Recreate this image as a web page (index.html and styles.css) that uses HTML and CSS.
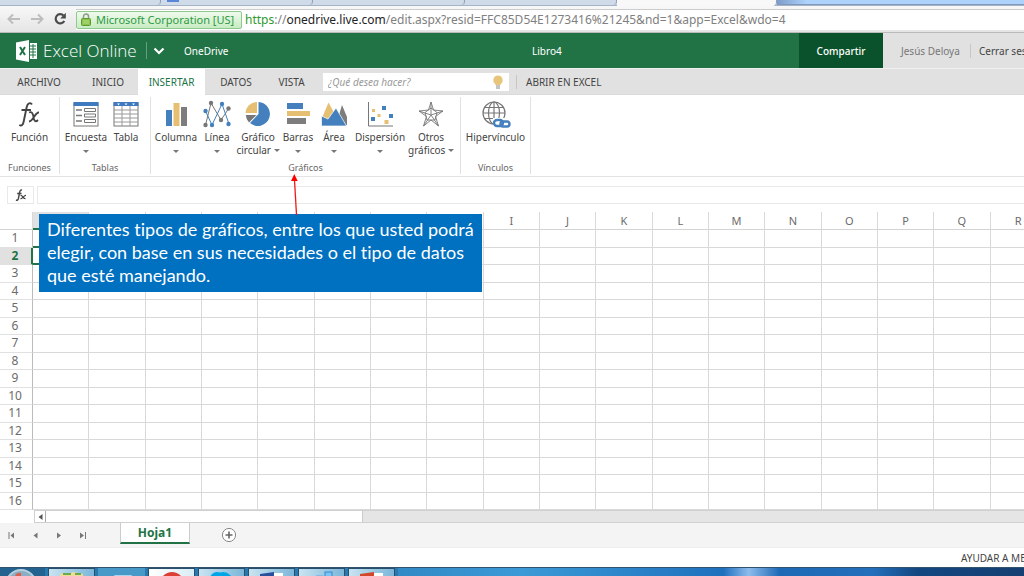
FILE: index.html
```html
<!DOCTYPE html>
<html lang="es">
<head>
<meta charset="utf-8">
<title>Libro4 - Excel Online</title>
<link rel="stylesheet" href="styles.css">
</head>
<body>
<div class="page">
  <div class="browser-tabs">
    <span class="browser-tab tab-first"></span><span class="browser-tab tab-docs"></span><span class="browser-tab"></span><span class="browser-tab"></span><span class="browser-tab tab-current"></span><span class="window-glass"></span>
  </div>
  <div class="toolbar">
    <button class="nav-button" aria-label="Atrás"><svg width="14" height="12" viewBox="0 0 14 12"><path d="M13 6H2M6 1.5L1.500 6L6 10.500" fill="none" stroke="#bdbdbd" stroke-width="2"/></svg></button>
    <button class="nav-button" aria-label="Adelante"><svg width="14" height="12" viewBox="0 0 14 12"><path d="M1 6H12M8 1.500L12.500 6L8 10.500" fill="none" stroke="#bdbdbd" stroke-width="2"/></svg></button>
    <button class="nav-button" aria-label="Recargar"><svg width="14" height="14" viewBox="0 0 14 14"><path d="M10.500 3.500A4.600 4.600 0 1 0 11.300 9" fill="none" stroke="#4a4a4a" stroke-width="2.200"/><path d="M12.800 0.800V6.500H7.200Z" fill="#4a4a4a"/></svg></button>
    <div class="address">
      <span class="certificate"><svg width="10" height="13" viewBox="0 0 10 13"><path d="M2.500 6V3.500a2.500 2.500 0 0 1 5 0V6" fill="none" stroke="#909a90" stroke-width="1.500"/><rect x="0.500" y="5.500" width="9" height="7" rx="1" fill="#8bc34a" stroke="#5c9a32"/><path d="M2 8H8M2 10H8" stroke="#b6dc84"/></svg>Microsoft Corporation [US]</span>
      <span class="url"><span class="scheme">https</span>://<span class="host">onedrive.live.com</span>/edit.aspx?resid=FFC85D54E1273416%21245&amp;nd=1&amp;app=Excel&amp;wdo=4</span>
    </div>
  </div>

  <header class="app-header">
    <svg class="excel-logo" width="22" height="22" viewBox="0 0 22 22"><path d="M0 2.500L13 0V22L0 19.500Z" fill="#fff"/><path d="M4 7L9 15M9 7L4 15" stroke="#217346" stroke-width="2"/><path d="M14 3H21V19H14Z" fill="#fff"/><path d="M14 6H20M14 9H20M14 12H20M14 15H20M17 4V18" stroke="#217346"/></svg>
    <span class="app-name">Excel Online</span>
    <button class="app-switch" aria-label="Aplicaciones"><svg width="12" height="8" viewBox="0 0 12 8"><path d="M1.500 1.500L6 6L10.500 1.500" fill="none" stroke="#fff" stroke-width="2.200"/></svg></button>
    <a class="drive-link" href="#">OneDrive</a>
    <span class="document-name">Libro4</span>
    <button class="share">Compartir</button>
    <div class="account"><span class="user">Jesús Deloya</span><a class="sign-out" href="#">Cerrar sesión</a></div>
  </header>

  <nav class="ribbon-tabs">
    <button class="ribbon-tab w-file">ARCHIVO</button>
    <button class="ribbon-tab w-home">INICIO</button>
    <button class="ribbon-tab w-insert active">INSERTAR</button>
    <button class="ribbon-tab w-data">DATOS</button>
    <button class="ribbon-tab w-view">VISTA</button>
    <label class="tell-me"><input type="text" placeholder="¿Qué desea hacer?" aria-label="¿Qué desea hacer?"><svg width="12" height="14" viewBox="0 0 12 14"><path d="M6 0.500a4.700 4.700 0 0 1 2.700 8.500V10H3.300V9A4.700 4.700 0 0 1 6 0.500Z" fill="#e9c57c"/><path d="M4 11H8M4 13H8" stroke="#888"/></svg></label>
    <a class="open-excel" href="#">ABRIR EN EXCEL</a>
  </nav>

  <section class="ribbon">
    <div class="group g-functions">
      <div class="commands">
        <button class="command"><svg width="28" height="28" viewBox="0 0 28 28"><path d="M17 4.500C15.500 2 12.500 3 11.700 7L8.800 21C8.200 25 6.500 26.500 4.300 25M6.500 10H16" fill="none" stroke="#444" stroke-width="1.900"/><path d="M14 12.500C17 11 18 14 18.500 17C19 21 20.500 22.500 23 20M24 12.500C20 12 18.500 21 14 21.500" fill="none" stroke="#444" stroke-width="1.800"/></svg><span>Función</span></button>
      </div>
      <div class="group-name">Funciones</div>
    </div>
    <div class="group g-tables">
      <div class="commands">
        <button class="command c50"><svg width="28" height="28" viewBox="0 0 28 28"><rect x="2" y="3" width="24" height="23" fill="#fff" stroke="#777"/><rect x="1.500" y="2" width="25" height="4" fill="#3f7abf"/><path d="M4 10H10M4 15.500H10M4 21H10" stroke="#777" stroke-width="1.500"/><path d="M12.500 8.500H23.500V11.500H12.500ZM12.500 14H23.500V17H12.500ZM12.500 19.500H23.500V22.500H12.500Z" fill="#fff" stroke="#777"/></svg><span>Encuesta</span><i class="caret"></i></button>
        <button class="command c30"><svg width="28" height="28" viewBox="0 0 28 28"><rect x="2" y="3" width="24" height="23" fill="#fff" stroke="#777"/><path d="M2 10H26M2 14H26M2 18H26M2 22H26M10 6V26M18 6V26" stroke="#999"/><rect x="1.500" y="2" width="25" height="4" fill="#3f7abf"/><path d="M5 3.500H8L6.500 5.200ZM12.500 3.500H15.500L14 5.200ZM20 3.500H23L21.500 5.200Z" fill="#fff"/></svg><span>Tabla</span></button>
      </div>
      <div class="group-name">Tablas</div>
    </div>
    <div class="group g-charts">
      <div class="commands">
        <button class="command c46"><svg width="28" height="28" viewBox="0 0 28 28"><rect x="4" y="10" width="6" height="16" fill="#4480bd"/><rect x="11.500" y="3" width="6" height="23" fill="#e6bf73"/><rect x="19" y="7" width="6" height="19" fill="#7d7d7d"/></svg><span>Columna</span><i class="caret"></i></button>
        <button class="command c36"><svg width="28" height="28" viewBox="0 0 28 28"><path d="M2.500 25L8 3L18 20L26 8" fill="none" stroke="#777"/><path d="M2.500 11L9 25L19 4L26 24" fill="none" stroke="#4480bd"/><g fill="#777"><circle cx="2.500" cy="25" r="2.200"/><circle cx="8" cy="3" r="2.200"/><circle cx="18" cy="20" r="2.200"/><circle cx="25.500" cy="8.500" r="2.200"/></g><g fill="#4480bd"><circle cx="2.500" cy="11" r="2.200"/><circle cx="9" cy="25" r="2.200"/><circle cx="19" cy="4" r="2.200"/><circle cx="25.500" cy="24" r="2.200"/></g></svg><span>Línea</span><i class="caret"></i></button>
        <button class="command c46"><svg width="28" height="28" viewBox="0 0 28 28"><path d="M14.500 14V2A12 12 0 1 1 6 23Z" fill="#4480bd"/><path d="M13 13V2A11.500 11.500 0 0 0 1.500 13Z" fill="#e6bf73"/><path d="M12.500 15H1.800A12 12 0 0 0 5 22.500Z" fill="#777"/></svg><span>Gráfico<br>circular <i class="caret inline"></i></span></button>
        <button class="command c34"><svg width="28" height="28" viewBox="0 0 28 28"><rect x="3" y="3" width="16" height="6" fill="#4480bd"/><rect x="3" y="11" width="23" height="5" fill="#e6bf73"/><rect x="3" y="18" width="19" height="6" fill="#7d7d7d"/></svg><span>Barras</span><i class="caret"></i></button>
        <button class="command c38"><svg width="28" height="28" viewBox="0 0 28 28"><path d="M2 18L8.500 2.500L17 18L13 25H2Z" fill="#e6bf73"/><path d="M16 25L22 5L27 17V25Z" fill="#7d7d7d"/><path d="M1.500 26V16L8 19L16 8L26.500 26Z" fill="#4480bd" stroke="#fff" stroke-width=".7"/></svg><span>Área</span><i class="caret"></i></button>
        <button class="command c54"><svg width="28" height="28" viewBox="0 0 28 28"><path d="M2.500 2V26H27" fill="none" stroke="#777"/><g fill="#4480bd"><rect x="16" y="6" width="4" height="4"/><rect x="5" y="17" width="4" height="4"/><rect x="23" y="14" width="4" height="4"/></g><g fill="#e6bf73"><rect x="6" y="9" width="3" height="3"/><rect x="11.500" y="14" width="3" height="3"/><rect x="18.500" y="20" width="4" height="4"/></g></svg><span>Dispersión</span><i class="caret"></i></button>
        <button class="command c48"><svg width="28" height="28" viewBox="0 0 28 28"><g fill="none" stroke="#777" stroke-width=".9"><path d="M14 2L16.500 10L26 11L18.500 16.500L21.500 26L14 20L6.500 26L9.500 16.500L2 11L11.500 10Z"/><path d="M14 8L20 12.500L18 20H10L8 12.500Z"/><path d="M14 15V2M14 15L26 11M14 15L21.500 26M14 15L6.500 26M14 15L2 11"/></g></svg><span>Otros<br>gráficos <i class="caret inline"></i></span></button>
      </div>
      <div class="group-name">Gráficos</div>
    </div>
    <div class="group g-links">
      <div class="commands">
        <button class="command"><svg width="32" height="28" viewBox="0 0 32 28"><g fill="none" stroke="#777" stroke-width="1.200"><circle cx="14" cy="13" r="11"/><ellipse cx="14" cy="13" rx="5.500" ry="11"/><path d="M14 2V24M3 13H25M4.500 7.500H23.500M4.500 18.500H23.500"/></g><rect x="13" y="18" width="18" height="10" fill="#fff"/><g fill="none" stroke="#4480bd" stroke-width="2.400"><rect x="14" y="20" width="9" height="6" rx="3"/><rect x="20.500" y="21.500" width="9" height="5" rx="2.500"/></g></svg><span>Hipervínculo</span></button>
      </div>
      <div class="group-name">Vínculos</div>
    </div>
  </section>

  <div class="formula-bar">
    <button class="fx" aria-label="Insertar función"><svg width="12" height="12" viewBox="0 0 12 12"><path d="M7 1.200C5.500 .5 5 1.500 4.600 3.500L3.400 9.500C3 11.200 2 11.500 1 11M2.200 4.500H6.500" fill="none" stroke="#444" stroke-width="1.400"/><path d="M5.500 6.500C8 6 7.500 10 10.500 9.500M11 6.300C9 6 8 9.500 5.500 9.800" fill="none" stroke="#444" stroke-width="1.200"/></svg></button>
    <input class="formula" type="text" aria-label="Barra de fórmulas">
  </div>

  <main class="sheet">
    <table class="cells">
      <colgroup><col class="row-heads"><col span="18"></colgroup>
      <thead><tr><th></th><th class="selected"></th><th></th><th></th><th></th><th></th><th></th><th></th><th></th><th>I</th><th>J</th><th>K</th><th>L</th><th>M</th><th>N</th><th>O</th><th>P</th><th>Q</th><th>R</th></tr></thead>
      <tbody id="rows"></tbody>
    </table>
    <div class="callout">Diferentes tipos de gráficos, entre los que usted podrá elegir, con base en sus necesidades o el tipo de datos que esté manejando.
      <svg class="pointer" width="12" height="42" viewBox="0 0 12 42"><path d="M7.500 42L5.500 7" stroke="#f01818" stroke-width="1.300"/><path d="M5.300 1L8.700 8H2Z" fill="#f00"/></svg>
    </div>
  </main>
  <div class="scrollbar"><button class="scroll-left" aria-label="Desplazar a la izquierda"><svg width="5" height="6" viewBox="0 0 5 6"><path d="M4.500 0V6L.5 3Z" fill="#555"/></svg></button><span class="thumb"></span></div>

  <div class="sheet-tabs">
    <button class="step" aria-label="Primera hoja"><svg width="7" height="7" viewBox="0 0 7 7"><path d="M1 0V7" stroke="#777"/><path d="M6 .5V6.500L2.500 3.500Z" fill="#777"/></svg></button>
    <button class="step" aria-label="Hoja anterior"><svg width="7" height="7" viewBox="0 0 7 7"><path d="M5.500 .5V6.500L1.500 3.500Z" fill="#777"/></svg></button>
    <button class="step" aria-label="Hoja siguiente"><svg width="7" height="7" viewBox="0 0 7 7"><path d="M1 .5V6.500L5 3.500Z" fill="#777"/></svg></button>
    <button class="step" aria-label="Última hoja"><svg width="7" height="7" viewBox="0 0 7 7"><path d="M5.500 0V7" stroke="#777"/><path d="M0 .5V6.500L4 3.500Z" fill="#777"/></svg></button>
    <button class="sheet-tab">Hoja1</button>
    <button class="add-sheet" aria-label="Nueva hoja"><svg width="16" height="16" viewBox="0 0 16 16"><circle cx="8" cy="8" r="6.600" fill="#fff" stroke="#888"/><path d="M8 4.500V11.500M4.500 8H11.500" stroke="#666" stroke-width="1.600"/></svg></button>
  </div>
  <footer class="status"><a class="help" href="#">AYUDAR A MEJORAR OFFICE</a></footer>
  <div class="taskbar">
    <span class="start"><svg width="48" height="8" viewBox="0 0 48 8"><circle cx="21" cy="17" r="15" fill="#8baec6" stroke="#b7d0de" stroke-width="2"/><path d="M15 8Q17 4 21 5V8Z" fill="#d9604c"/></svg></span>
    <span class="task"><svg width="46" height="8" viewBox="0 0 46 8"><path d="M11 8V5L15 4H22L24 3L34 5V8Z" fill="#efdc97"/><path d="M14 5H22M26 5H32" stroke="#6aab4e" stroke-width="2"/></svg></span>
    <span class="task plain"><svg width="46" height="8" viewBox="0 0 46 8"><rect x="15" y="6" width="18" height="4" rx="1" fill="#a8d4ef"/></svg></span>
    <span class="task bright"><svg width="46" height="8" viewBox="0 0 46 8"><circle cx="23" cy="15" r="12" fill="#dc3f35"/></svg></span>
    <span class="task"><svg width="46" height="8" viewBox="0 0 46 8"><circle cx="18" cy="10" r="7" fill="#00a6e8"/><circle cx="24" cy="13" r="10" fill="#00a6e8"/></svg></span>
    <span class="task"><svg width="46" height="8" viewBox="0 0 46 8"><path d="M11 5L25 3V8H11Z" fill="#28509c"/><path d="M25 4H34V8H25Z" fill="#fff"/></svg></span>
    <span class="task"><svg width="46" height="8" viewBox="0 0 46 8"><rect x="26" y="3" width="7" height="6" fill="#7cc4f4" stroke="#3189d0"/><rect x="17" y="6" width="7" height="3" fill="#80bce5"/></svg></span>
    <span class="task"><svg width="46" height="8" viewBox="0 0 46 8"><path d="M11 5L25 3V8H11Z" fill="#d3472a"/><path d="M25 4H34V8H25Z" fill="#fff"/></svg></span>
    <span class="task-space"></span>
  </div>
</div>
<script src="sheet.js"></script>
</body>
</html>
```
FILE: sheet.js
```js
const body = document.getElementById('rows');
for (let r = 1; r <= 16; r++) {
  const row = body.insertRow();
  const head = document.createElement('th');
  head.textContent = r;
  row.append(head);
  for (let c = 0; c < 18; c++) row.insertCell();
  if (r === 2) row.className = 'selected-row';
  if (r === 1) row.className = 'before-selected';
}
```
FILE: styles.css
```css
* { box-sizing: border-box; }
body { margin: 0; font-family: "Noto Sans", "Open Sans", sans-serif; font-size: 10px; color: #444; background: #fff; }
button, input { font: inherit; color: inherit; border: 0; padding: 0; margin: 0; background: none; }
a { color: inherit; text-decoration: none; }
svg { display: block; flex: none; }
.page { display: flex; flex-direction: column; height: 100vh; min-width: 0; overflow: hidden; }

.browser-tabs { display: flex; flex: none; height: 6px; background: #c9d6e6; border-bottom: 1px solid #a5b3c6; }
.browser-tab { width: 152px; border-right: 1px solid #8f9fb8; border-radius: 0 0 4px 0; background: #d0dbea; }
.tab-first { width: 161px; }
.tab-docs { background: linear-gradient(#5b86d8, #5b86d8) 6px 0 / 12px 2px no-repeat #d0dbea; }
.tab-current { width: 160px; height: 6px; background: #f8f8f9; }
.window-glass { flex: 1; background: linear-gradient(90deg, #7d9cca, #add3fa 30px); border-bottom: 1px solid #8098bd; }
.toolbar { display: flex; flex: none; align-items: center; height: 27px; padding-left: 7px; gap: 9px; background: linear-gradient(#f8f8f8, #e5e5e5); border-bottom: 1px solid #bbb; }
.nav-button { width: 14px; }
.address { display: flex; flex: 1; min-width: 0; align-items: center; height: 21px; background: #fff; border-top: 1px solid #ccc; font-size: 12px; white-space: nowrap; overflow: hidden; }
.certificate { display: flex; flex: none; align-items: center; gap: 5px; height: 18px; width: 166px; padding-left: 4px; color: #2e9a45; font-size: 11px; background: linear-gradient(#f0faec, #c7ecc2); border: 1px solid #8fc98f; border-radius: 2px; }
.url { margin-left: 3px; color: #808080; line-height: 17px; padding-bottom: 1px; }
.scheme { color: #2e9a2e; }
.host { color: #222; }

.app-header { display: flex; flex: none; align-items: center; height: 35px; background: #217346; color: #fff; white-space: nowrap; overflow: hidden; }
.excel-logo { margin-left: 16px; }
.app-name { width: 103px; margin-left: 5px; font-size: 17px; font-weight: 300; font-family: "Open Sans", sans-serif; }
.app-switch { display: flex; align-items: center; height: 17px; width: 38px; padding-left: 6px; border-left: 1px solid #64a07e; }
.drive-link { width: 60px; }
.document-name { flex: 1; padding-left: 288px; }
.share { width: 84px; height: 35px; background: #0a522b; font-weight: 500; }
.account { display: flex; align-items: center; width: 141px; height: 35px; background: #e1e1e1; color: #444; overflow: hidden; }
.user { flex: none; width: 70px; margin-left: 18px; color: #777; border-right: 1px solid #c6c6c6; }
.sign-out { flex: none; padding-left: 8px; }

.ribbon-tabs { display: flex; flex: none; align-items: center; height: 27px; border-top: 1px solid #f0f0f0; background: #e1e1e1; border-bottom: 1px solid #dadada; }
.ribbon-tab { height: 26px; text-align: center; white-space: nowrap; }
.ribbon-tab.active { background: #fff; color: #217346; }
.w-file { width: 78px; }
.w-home { width: 60px; }
.w-insert { width: 67px; }
.w-data { width: 62px; }
.w-view { width: 49px; }
.tell-me { display: flex; align-items: center; width: 186px; height: 18px; margin-left: 7px; padding: 0 5px; background: #fff; }
.tell-me input { flex: 1; min-width: 0; outline: 0; font-style: italic; }
.tell-me input::placeholder { color: #999; opacity: 1; }
.open-excel { margin-left: 7px; padding-left: 9px; border-left: 1px solid #c6c6c6; }

.ribbon { display: flex; flex: none; height: 82px; border-bottom: 1px solid #e4e4e4; }
.group { display: flex; flex-direction: column; justify-content: space-between; margin: 2px 0 2px; border-right: 1px solid #e1e1e1; }
.g-functions { width: 60px; }
.g-tables { width: 91px; }
.g-charts { width: 310px; }
.g-links { width: 70px; }
.commands { display: flex; padding: 3px 1px 0; }
.g-functions .commands, .g-links .commands { justify-content: center; }
.command { display: flex; flex: none; flex-direction: column; align-items: center; line-height: 13px; white-space: nowrap; }
.command span { margin-top: 3px; }
.g-charts .commands { padding-left: 2px; }
.c30 { width: 30px; } .c34 { width: 34px; } .c36 { width: 36px; } .c38 { width: 38px; }
.c46 { width: 46px; } .c48 { width: 48px; } .c50 { width: 50px; } .c54 { width: 54px; }
.caret { margin-top: 6px; border: 3px solid transparent; border-top-color: #777; border-bottom: 0; }
.caret.inline { display: inline-block; margin: 0 0 2px; }
.group-name { text-align: center; font-size: 9px; line-height: 12px; color: #666; }

.formula-bar { display: flex; flex: none; gap: 3px; height: 27px; padding: 9px 0 0 7px; }
.fx { display: flex; align-items: center; justify-content: center; width: 27px; height: 18px; border: 1px solid #e9e9e9; }
.formula { flex: 1; min-width: 0; height: 18px; border: 1px solid #e9e9e9; border-right: 0; }

.sheet { position: relative; display: flex; flex: 1; min-height: 0; padding-top: 8px; }
.cells { width: calc(100% + 23px); margin-right: -23px; flex: none; height: 100%; table-layout: fixed; border-spacing: 0; }
.row-heads { width: 33px; }
.cells th { padding: 0; font-size: 12px; line-height: 15px; font-weight: 400; color: #6b6b6b; }
.cells tbody th { padding: 0 2px 1px 0; }
.cells thead th { height: 18px; padding-bottom: 1px; font-size: 11px; border-right: 1px solid #d9d9d9; border-bottom: 1px solid #d4d4d4; }
.cells thead .selected { background: #e1e1e1; border-bottom: 2px solid #217346; }
.cells td { padding: 0; border-right: 1px solid #d9d9d9; border-bottom: 1px solid #d9d9d9; }
.cells tbody th { border-bottom: 1px solid #e1e1e1; border-right: 1px solid #bbb; }
.cells .selected-row th { background: #e1e1e1; color: #217346; font-weight: 700; border-right: 2px solid #217346; padding-right: 1px; }
.cells .before-selected td:nth-child(2), .cells .selected-row td:nth-child(2) { border-bottom: 2px solid #217346; }
.callout { position: absolute; left: 39px; top: 10px; width: 443px; padding: 4px 8px 5px; background: #0070c0; color: #fff; font: 18px/23px Lato, "Open Sans", sans-serif; font-variant-ligatures: none; }
.pointer { position: absolute; left: 250px; top: -41px; }

.scrollbar { display: flex; flex: none; height: 13px; margin-left: 34px; background: #e5e5e5; border: 1px solid #d0d0d0; border-right: 0; }
.scroll-left { display: flex; align-items: center; justify-content: center; width: 11px; background: #fff; border-right: 1px solid #aaa; }
.thumb { flex: 0 1 317px; background: #fff; border-right: 1px solid #ccc; }
.sheet-tabs { display: flex; flex: none; align-items: center; height: 25px; padding-left: 8px; background: #f4f4f4; border-bottom: 1px solid #eee; }
.step { width: 7px; margin-right: 17px; }
.sheet-tab { align-self: flex-start; width: 70px; height: 21px; margin: 0 31px 0 16px; background: #fff; border: 1px solid #ccc; border-top: 0; border-bottom: 2px solid #217346; color: #217346; font-size: 12px; font-weight: 700; line-height: 18px; }
.status { display: flex; flex: none; justify-content: flex-end; align-items: center; height: 19px; overflow: hidden; }
.help { flex: none; width: 63px; white-space: nowrap; }
.taskbar { display: flex; flex: none; height: 9px; gap: 3px; border-top: 1px solid #33536b; background: #2a78b0; overflow: hidden; }
.start { width: 45px; background: #24638f; overflow: hidden; }
.task { width: 47px; background: linear-gradient(90deg, #c9e4f1, #7bb6d9); border: 1px solid #284f6c; border-bottom: 0; overflow: hidden; }
.task.plain { background: #4799c8; border-color: transparent; }
.task.bright { background: linear-gradient(90deg, #fff, #d8edf6); }
.task-space { flex: 1; background: linear-gradient(90deg, #3189c5, #3c9ad6 20%, #1e70bd 52%, #8dbced 56%, #1d69b5 61%, #236fbb 76%, #134680 83%, #153f72); }
```
